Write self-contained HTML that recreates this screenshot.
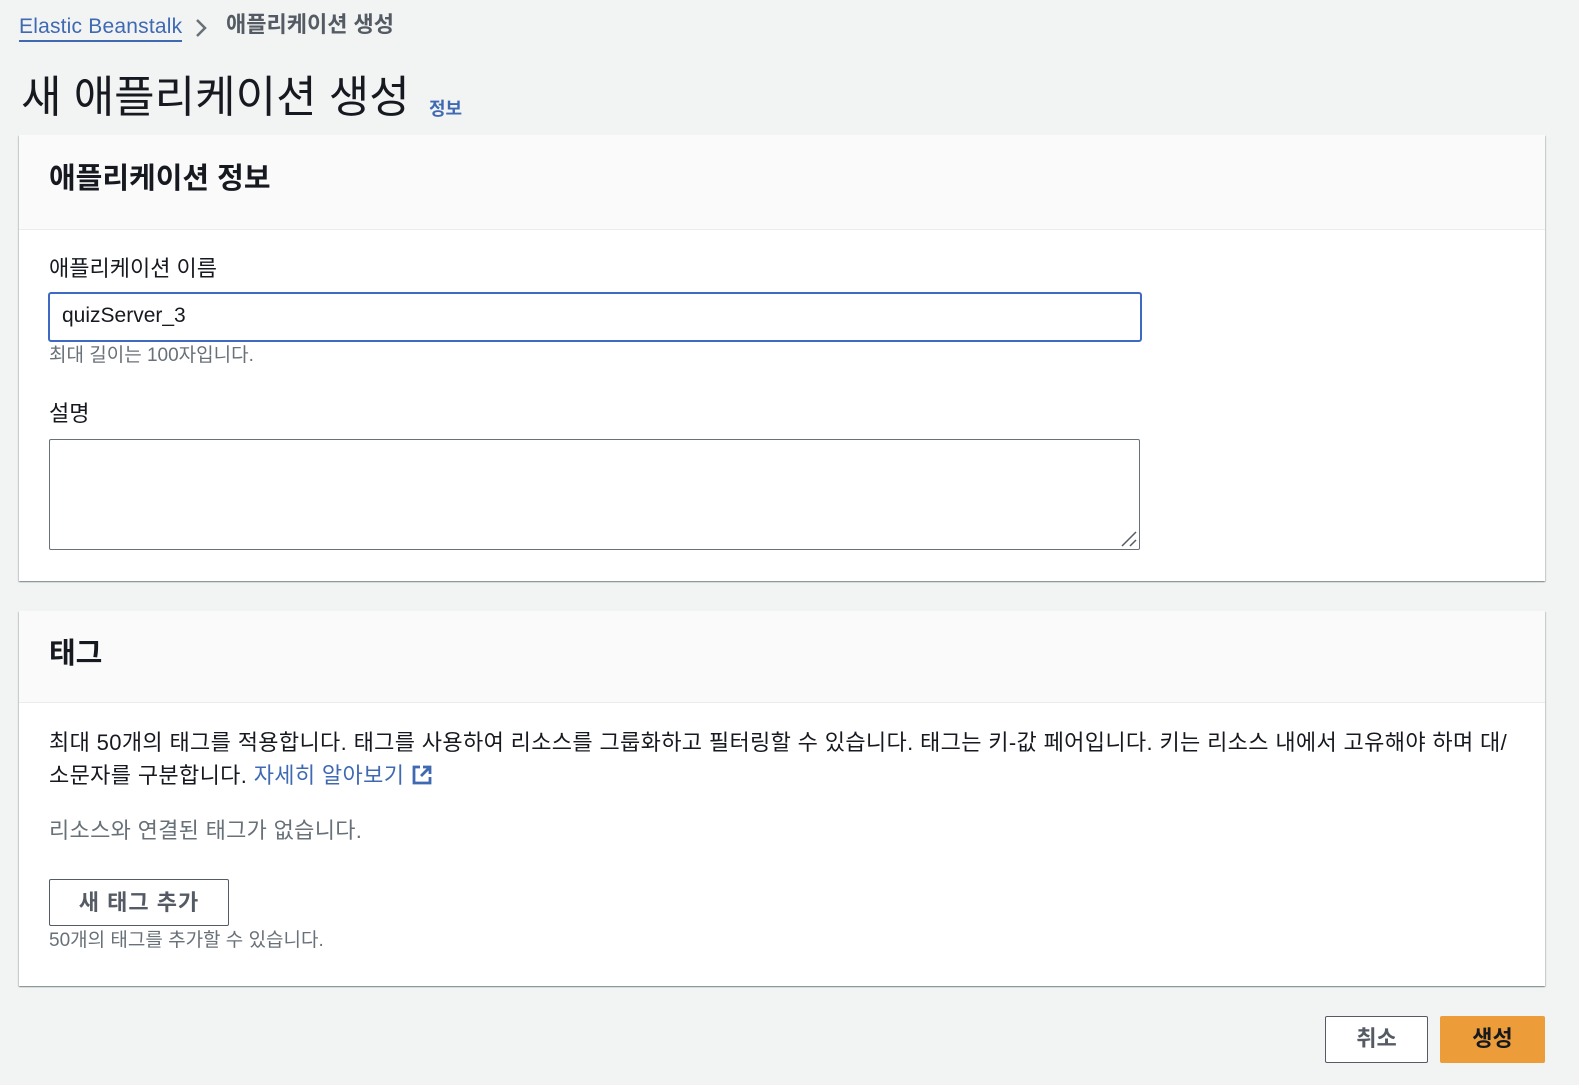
<!DOCTYPE html>
<html><head><meta charset="utf-8"><style>
body{margin:0;background:#f2f3f3;font-family:"Liberation Sans","Noto Sans CJK KR",sans-serif;color:#16191f;width:1579px;height:1085px;overflow:hidden;position:relative}
.a{position:absolute;white-space:nowrap}
.panel{position:absolute;left:19px;width:1526px;background:#fff;box-shadow:0 1px 1px rgba(0,28,36,.3),1px 1px 1px rgba(0,28,36,.15),-1px 1px 1px rgba(0,28,36,.15)}
.ph{position:absolute;left:0;top:0;width:100%;background:#fafafa;border-bottom:1px solid #eaeded}
</style></head><body>
<div class="a" style="left:19px;top:13px;font-size:21px;letter-spacing:0.2px;color:#3f6ab2;border-bottom:2px solid #3f6ab2;line-height:27px">Elastic Beanstalk</div>
<svg class="a" style="left:193px;top:18px" width="16" height="20"><path d="M4 2 L12 10 L4 18" stroke="#687078" stroke-width="2.5" fill="none"/></svg>
<div class="a" style="left:226px;top:10px;font-size:22px;color:#545b64;line-height:30px;font-weight:bold">애플리케이션 생성</div>
<div class="a" style="left:21px;top:70px;font-size:44px;line-height:56px">새 애플리케이션 생성</div>
<div class="a" style="left:429px;top:95px;font-size:18px;color:#3f6ab2;font-weight:bold">정보</div>

<div class="panel" style="top:135px;height:446px">
 <div class="ph" style="height:94px"></div>
 <div class="a" style="left:30px;top:25px;font-size:29px;font-weight:bold;line-height:38px">애플리케이션 정보</div>
 <div class="a" style="left:30px;top:119px;font-size:22px;line-height:30px">애플리케이션 이름</div>
 <div class="a" style="left:29px;top:157px;width:1090px;height:46px;border:2px solid #3f6ac4;border-radius:3px"></div>
 <div class="a" style="left:43px;top:167px;font-size:21px;line-height:28px">quizServer_3</div>
 <div class="a" style="left:30px;top:209px;font-size:19px;color:#687078;line-height:24px">최대 길이는 100자입니다.</div>
 <div class="a" style="left:30px;top:264px;font-size:22px;line-height:30px">설명</div>
 <div class="a" style="left:30px;top:304px;width:1089px;height:109px;border:1px solid #687078;border-radius:2px"></div>
 <svg class="a" style="left:1102px;top:396px" width="16" height="16"><path d="M1 15 L15 1 M9 15 L15 9" stroke="#545b64" stroke-width="1.5"/></svg>
</div>

<div class="panel" style="top:611px;height:375px">
 <div class="ph" style="height:91px"></div>
 <div class="a" style="left:30px;top:24px;font-size:29px;font-weight:bold;line-height:38px">태그</div>
 <div class="a" style="left:30px;top:115px;font-size:22px;line-height:33px;letter-spacing:0.35px">최대 50개의 태그를 적용합니다. 태그를 사용하여 리소스를 그룹화하고 필터링할 수 있습니다. 태그는 키-값 페어입니다. 키는 리소스 내에서 고유해야 하며 대/<br>소문자를 구분합니다. <span style="color:#3f6ab2">자세히 알아보기</span> <svg width="22" height="22" style="vertical-align:-3px"><path d="M9 3 H3 V19 H19 V13" stroke="#3f6ab2" stroke-width="2.8" fill="none"/><path d="M12 3 H19 V10 M19 3 L10 12" stroke="#3f6ab2" stroke-width="2.8" fill="none"/></svg></div>
 <div class="a" style="left:30px;top:205px;font-size:22px;color:#687078;line-height:30px;letter-spacing:0.3px">리소스와 연결된 태그가 없습니다.</div>
 <div class="a" style="left:30px;top:268px;width:178px;height:45px;border:1px solid #545b64;border-radius:2px;text-align:center;line-height:45px;font-size:22px;font-weight:bold;color:#545b64;letter-spacing:1px">새 태그 추가</div>
 <div class="a" style="left:30px;top:318px;font-size:19px;color:#687078;line-height:24px">50개의 태그를 추가할 수 있습니다.</div>
</div>

<div class="a" style="left:1325px;top:1016px;width:101px;height:45px;border:1px solid #545b64;border-radius:2px;background:#fff;text-align:center;line-height:44px;font-size:22px;font-weight:bold;color:#545b64">취소</div>
<div class="a" style="left:1440px;top:1016px;width:105px;height:47px;background:#ec9c39;border-radius:2px;text-align:center;line-height:45px;font-size:22px;font-weight:bold;color:#16191f">생성</div>
</body></html>
